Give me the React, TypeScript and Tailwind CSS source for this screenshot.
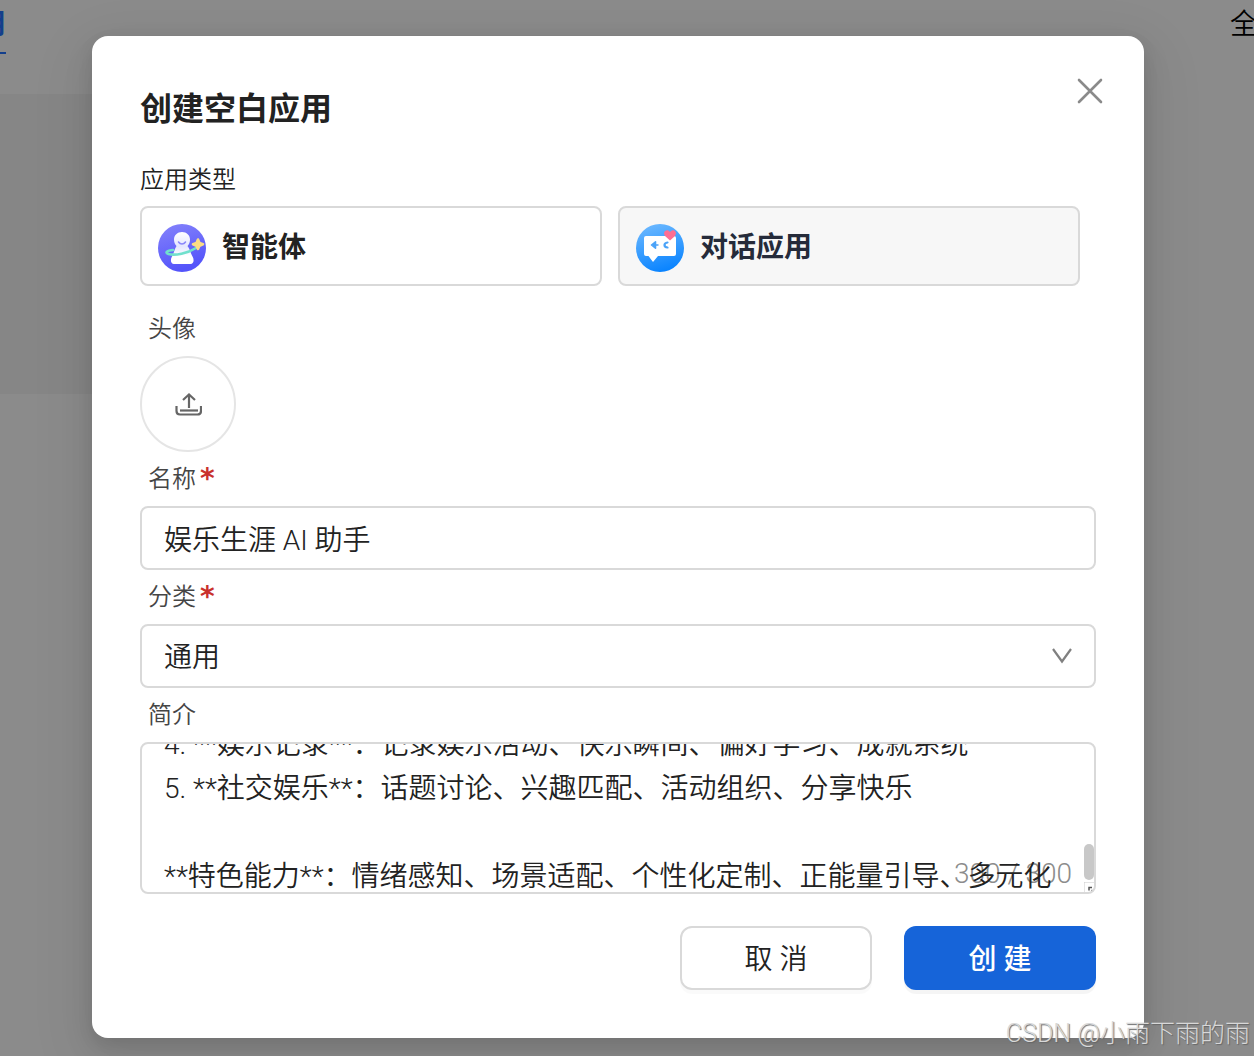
import { useEffect, useRef, useState, type ReactNode } from "react";

const INTRO = [
  "4. **娱乐记录**：记录娱乐活动、快乐瞬间、偏好学习、成就系统",
  "5. **社交娱乐**：话题讨论、兴趣匹配、活动组织、分享快乐",
  "",
  "**特色能力**：情绪感知、场景适配、个性化定制、正能量引导、多元化",
].join("\n");

function AgentIcon() {
  return (
    <svg viewBox="0 0 48 48" className="size-12 shrink-0" aria-hidden="true">
      <defs>
        <linearGradient id="agentBg" x1="0" y1="0" x2="0.3" y2="1">
          <stop offset="0" stopColor="#8583fb" />
          <stop offset="1" stopColor="#5454fa" />
        </linearGradient>
        <linearGradient id="agentBody" x1="0" y1="0" x2="0" y2="1">
          <stop offset="0" stopColor="#ffffff" />
          <stop offset="0.45" stopColor="#e4e6ff" />
          <stop offset="0.75" stopColor="#ffffff" />
        </linearGradient>
      </defs>
      <circle cx="24" cy="24" r="24" fill="url(#agentBg)" />
      <path d="M24 8c4.600 0 8 3.200 8 7.500 0 2.800-1 5-2.500 6.500 2.500 3 3 7 5 10.500 1.800 3 1.500 7.500-2 7.500H16c-3.500 0-3.800-4.500-2-7.500 2-3.500 2.500-7.500 4.500-10.500-1.500-1.500-2.500-3.700-2.500-6.500C16 11.200 19.400 8 24 8z" fill="url(#agentBody)" />
      <path d="M20.500 18c1.800 2.800 5.200 2.800 7 0" fill="none" stroke="#8a86fb" strokeWidth="1.500" strokeLinecap="round" />
      <path d="M15 26c-6 .3-8.500 2.800-4.500 4 6.500 1.800 19-.5 27.500-6" fill="none" stroke="#70e0cc" strokeWidth="2.600" strokeLinecap="round" />
      <path d="M40 15.500l1.500 3.500 3.500 1.200-3.500 1.500L40 25l-1.500-3.300-3.500-1.500 3.500-1.200z" fill="#fbdd84" stroke="#fbdd84" strokeWidth="2.600" strokeLinejoin="round" />
    </svg>
  );
}

function ChatIcon() {
  return (
    <svg viewBox="0 0 48 48" className="size-12 shrink-0" aria-hidden="true">
      <defs>
        <linearGradient id="chatBg" x1="0.2" y1="0" x2="0.5" y2="1">
          <stop offset="0" stopColor="#6db9ff" />
          <stop offset="1" stopColor="#0a84ff" />
        </linearGradient>
      </defs>
      <circle cx="24" cy="24" r="24" fill="url(#chatBg)" />
      <path d="M10 12h28a2 2 0 0 1 2 2v16a2 2 0 0 1-2 2H22l-5 6-4.500-6H10a2 2 0 0 1-2-2V14a2 2 0 0 1 2-2z" fill="#fff" />
      <path d="M15.500 21l4-3.200v6.400zM18 21h4.500" fill="#4ba3f8" stroke="#4ba3f8" strokeWidth="1.600" strokeLinejoin="round" />
      <path d="M31.500 18.500c-4 .5-4 4.500 0 5" fill="none" stroke="#4ba3f8" strokeWidth="2.200" strokeLinecap="round" />
      <path d="M34 16.500l-5-4.500c-3-4 2-8 5-4 3-4 8-.5 5 4z" fill="#ff6e93" />
    </svg>
  );
}

function Label({ htmlFor, required, children }: { htmlFor: string; required?: boolean; children: ReactNode }) {
  return (
    <label htmlFor={htmlFor} className="flex h-[54px] items-center gap-1 pl-2 text-2xl font-[350] text-[#454545]">
      {children}
      {required && <span className="font-['DejaVu_Sans'] text-[28px] leading-8 font-bold text-[#c9302c]">*</span>}
    </label>
  );
}

export default function App() {
  const intro = useRef<HTMLTextAreaElement>(null);
  const [kind, setKind] = useState("agent");

  useEffect(() => {
    if (intro.current) intro.current.scrollTop = 29;
  }, []);

  const card = "flex h-20 flex-1 cursor-pointer items-center gap-4 rounded-lg border-2 border-[#d9d9d9] px-4 pt-1 text-[28px] font-bold";

  return (
    <div className="relative min-h-screen overflow-hidden bg-[#8b8b8b] font-['Roboto','Noto_Sans_CJK_SC',sans-serif] text-[#222222]">
      <div className="absolute inset-x-0 top-0 flex h-[94px] items-start justify-between overflow-hidden text-[28px] leading-[50px] font-[350] text-black">
        <a href="#apps" className="-ml-[22px] h-[54px] border-b-2 border-[#133f8c] font-bold text-[#133f8c]">用</a>
        <a href="#all" className="-mr-8">全部</a>
      </div>
      <div className="absolute left-0 top-[94px] h-[300px] w-[92px] bg-[#868686]" />

      <div className="relative pt-9 pr-[110px] pb-[18px] pl-[92px]">
        <div role="dialog" aria-labelledby="title" className="relative rounded-2xl bg-white px-12 pt-12 pb-12 shadow-[0_12px_32px_rgba(0,0,0,0.08),0_6px_16px_rgba(0,0,0,0.08),0_18px_56px_16px_rgba(0,0,0,0.05)]">
          <button type="button" aria-label="关闭" className="absolute top-[41px] right-10 text-[#8a8a8a]">
            <svg viewBox="0 0 28 28" className="size-7" fill="none" stroke="currentColor" strokeWidth="2.600" strokeLinecap="round" aria-hidden="true">
              <path d="M3 3l22 22M25 3L3 25" />
            </svg>
          </button>
          <h2 id="title" className="text-[32px] leading-[50px] font-bold">创建空白应用</h2>

          <form onSubmit={(e) => e.preventDefault()}>
            <fieldset>
              <legend className="pt-6 pb-1 text-2xl leading-[44px] font-[350]">应用类型</legend>
              <div className="flex gap-4 pr-4">
                <label className={card + " bg-white"}>
                  <input type="radio" name="kind" className="sr-only" checked={kind === "agent"} onChange={() => setKind("agent")} />
                  <AgentIcon />
                  <span>智能体</span>
                </label>
                <label className={card + " bg-[#f7f7f7] text-[#252b3a]"}>
                  <input type="radio" name="kind" className="sr-only" checked={kind === "chat"} onChange={() => setKind("chat")} />
                  <ChatIcon />
                  <span>对话应用</span>
                </label>
              </div>
            </fieldset>

            <div className="pt-4">
              <Label htmlFor="avatar">头像</Label>
              <button id="avatar" type="button" aria-label="上传头像" className="flex size-24 items-center justify-center rounded-full border-2 border-[#e5e5e5]">
                <svg viewBox="0 0 28 28" className="size-7" fill="none" stroke="#666" strokeWidth="2.200" aria-hidden="true">
                  <path d="M15 18V5M9 10l6-5.500L21 10" />
                  <path d="M2.500 16v5q0 3.500 3.500 3.500h17.500q3.500 0 3.500-3.500V16" />
                  <path d="M6 20.500h18" />
                </svg>
              </button>
            </div>

            <Label htmlFor="name" required>名称</Label>
            <input id="name" defaultValue="娱乐生涯 AI 助手" className="h-16 w-full rounded-lg border-2 border-[#d9d9d9] px-[22px] text-[28px] font-[350] outline-none" />

            <Label htmlFor="category" required>分类</Label>
            <div className="relative">
              <select id="category" className="h-16 w-full appearance-none rounded-lg border-2 border-[#d9d9d9] bg-white px-[22px] pt-1 text-[28px] font-[350] outline-none">
                <option>通用</option>
              </select>
              <svg viewBox="0 0 24 24" className="pointer-events-none absolute top-5 right-[22px] size-6" fill="none" stroke="#808080" strokeWidth="2.200" aria-hidden="true">
                <path d="M3 5l9 12.500 9-12.500" />
              </svg>
            </div>

            <Label htmlFor="intro">简介</Label>
            <div className="relative overflow-hidden rounded-lg border-2 border-[#d9d9d9]">
              <div className="pointer-events-none absolute right-[22px] bottom-0 text-[28px] leading-9 font-light text-[#8c8c8c]">300 / 300</div>
              <textarea
                id="intro"
                ref={intro}
                maxLength={300}
                defaultValue={INTRO}
                className="relative block h-[148px] w-full resize-none overflow-y-scroll bg-transparent px-[22px] py-2 text-[28px] leading-[44px] font-[350] outline-none [scrollbar-width:none]"
              />
              <div className="absolute right-0 bottom-3 h-9 w-2.5 rounded-full bg-[#c8c8c8]" />
              <svg viewBox="0 0 10 10" className="absolute right-0 bottom-0 size-2.5" aria-hidden="true">
                <path d="M0 10V0H10" fill="none" stroke="#ccc" />
                <path d="M5 8.500V5.500h3M7.500 8.500h1" fill="none" stroke="#555" strokeWidth="1.500" />
              </svg>
            </div>

            <div className="flex justify-end gap-8 pt-8">
              <button type="button" className="h-16 w-48 rounded-xl border-2 border-[#d9d9d9] pt-1 text-[28px] font-[350] shadow-[0_4px_0_rgba(0,0,0,0.02)]">取 消</button>
              <button type="submit" className="h-16 w-48 rounded-xl bg-[#1664d9] pt-1 text-[28px] font-medium text-white shadow-[0_4px_0_rgba(0,0,0,0.04)]">创 建</button>
            </div>
          </form>
        </div>
      </div>
      <div className="absolute right-1 bottom-1 text-[25px] leading-9 font-light text-[#d8d8d8] [text-shadow:1px_1px_1px_#666]">CSDN @小雨下雨的雨</div>
    </div>
  );
}
